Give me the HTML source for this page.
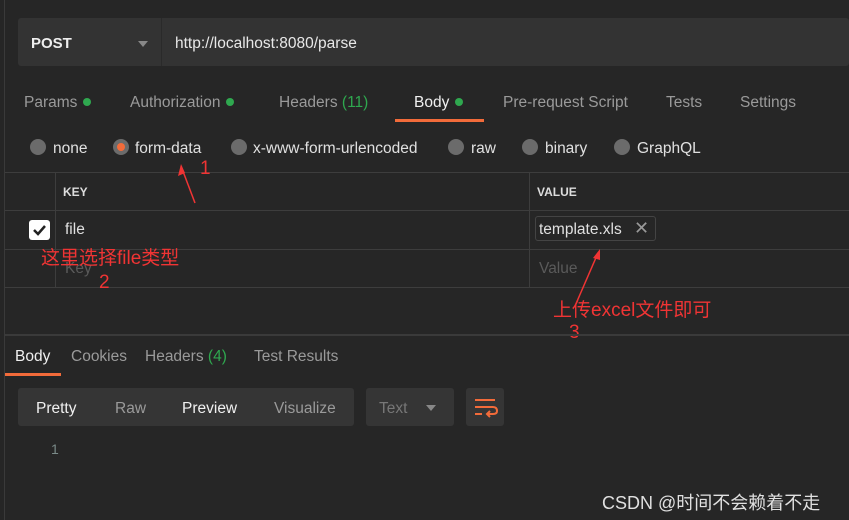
<!DOCTYPE html>
<html><head><meta charset="utf-8"><style>
*{margin:0;padding:0;box-sizing:border-box}
body{width:849px;height:520px;background:#262626;font-family:"Liberation Sans","Noto Sans CJK SC",sans-serif;color:#e0e0e0;position:relative;overflow:hidden;font-size:15.5px}
.a{position:absolute;white-space:nowrap}
.h{position:absolute;height:1px;background:#3d3d3d}
.v{position:absolute;width:1px;background:#3d3d3d}
.dot{display:inline-block;width:8px;height:8px;border-radius:50%;background:#2fa84f;margin-left:6px;vertical-align:1px}
.rad{position:absolute;width:16px;height:16px;border-radius:50%;background:#6b6b6b}
.g{color:#9a9a9a}
.red{color:#f03434;font-size:19px}
</style></head><body>
<div class="v" style="left:4px;top:0;height:520px;background:#3a3a3a"></div>
<div class="a" style="left:18px;top:18px;width:831px;height:48px;background:#333;border-radius:3px"></div>
<div class="v" style="left:161px;top:18px;height:48px;background:#2a2a2a"></div>
<div class="a" style="left:31px;top:35px;font-weight:bold;font-size:15px;color:#eee">POST</div>
<div class="a" style="left:138px;top:41px;width:0;height:0;border-left:5px solid transparent;border-right:5px solid transparent;border-top:6px solid #888"></div>
<div class="a" style="left:175px;top:35px;color:#e8e8e8">http://localhost:8080/parse</div>

<div class="a g" style="left:24px;top:94px">Params<span class="dot"></span></div>
<div class="a g" style="left:130px;top:94px">Authorization<span class="dot"></span></div>
<div class="a g" style="left:279px;top:94px">Headers <span style="color:#2fa84f">(11)</span></div>
<div class="a" style="left:414px;top:94px;color:#f0f0f0">Body<span class="dot"></span></div>
<div class="a" style="left:395px;top:119px;width:89px;height:3px;background:#f26b3a"></div>
<div class="a g" style="left:503px;top:94px">Pre-request Script</div>
<div class="a g" style="left:666px;top:94px">Tests</div>
<div class="a g" style="left:740px;top:94px">Settings</div>

<div class="rad" style="left:30px;top:139px"></div><div class="a" style="left:53px;top:140px">none</div>
<div class="rad" style="left:113px;top:139px;background:#6b6b6b"></div><div class="a" style="left:117px;top:143px;width:8px;height:8px;border-radius:50%;background:#f26b3a"></div>
<div class="a" style="left:135px;top:140px">form-data</div>
<div class="rad" style="left:231px;top:139px"></div><div class="a" style="left:253px;top:140px">x-www-form-urlencoded</div>
<div class="rad" style="left:448px;top:139px"></div><div class="a" style="left:471px;top:140px">raw</div>
<div class="rad" style="left:522px;top:139px"></div><div class="a" style="left:545px;top:140px">binary</div>
<div class="rad" style="left:614px;top:139px"></div><div class="a" style="left:637px;top:140px">GraphQL</div>

<div class="h" style="left:5px;top:172px;width:844px"></div>
<div class="h" style="left:5px;top:210px;width:844px"></div>
<div class="h" style="left:5px;top:249px;width:844px"></div>
<div class="h" style="left:5px;top:287px;width:844px"></div>
<div class="v" style="left:55px;top:172px;height:115px"></div>
<div class="v" style="left:529px;top:172px;height:115px"></div>
<div class="a" style="left:63px;top:185px;font-size:12px;font-weight:bold;color:#ddd">KEY</div>
<div class="a" style="left:537px;top:185px;font-size:12px;font-weight:bold;color:#ddd">VALUE</div>
<div class="a" style="left:29px;top:220px;width:21px;height:20px;background:#fff;border-radius:3px"></div>
<svg class="a" style="left:29px;top:220px" width="21" height="20"><path d="M5 10 L9 14 L16 6" stroke="#222" stroke-width="2.5" fill="none"/></svg>
<div class="a" style="left:65px;top:221px">file</div>
<div class="a" style="left:535px;top:216px;width:121px;height:25px;border:1px solid #444;border-radius:3px"></div>
<div class="a" style="left:539px;top:221px">template.xls</div>
<div class="a" style="left:634px;top:218px;color:#999;font-size:18px">✕</div>
<div class="a" style="left:65px;top:260px;color:#5a5a5a">Key</div>
<div class="a" style="left:539px;top:260px;color:#5a5a5a">Value</div>

<div class="a red" style="left:41px;top:243px">这里选择file类型</div>
<div class="a red" style="left:99px;top:272px">2</div>
<div class="a red" style="left:200px;top:158px">1</div>
<div class="a red" style="left:553px;top:295px">上传excel文件即可</div>
<div class="a red" style="left:569px;top:322px">3</div>
<svg class="a" style="left:0;top:0" width="849" height="520"><path d="M195 203 L181 166" stroke="#f03434" stroke-width="1.5"/><path d="M181 164 L178 176 L185 173Z" fill="#f03434"/><path d="M575 306 L598 253" stroke="#f03434" stroke-width="1.5"/><path d="M600 249 L593 258 L600 260Z" fill="#f03434"/></svg>

<div class="h" style="left:5px;top:334px;width:844px;height:2px;background:#3a3a3a"></div>
<div class="a" style="left:15px;top:348px;color:#f0f0f0">Body</div>
<div class="a" style="left:5px;top:373px;width:56px;height:3px;background:#f26b3a"></div>
<div class="a g" style="left:71px;top:348px">Cookies</div>
<div class="a g" style="left:145px;top:348px">Headers <span style="color:#2fa84f">(4)</span></div>
<div class="a g" style="left:254px;top:348px">Test Results</div>

<div class="a" style="left:18px;top:388px;width:336px;height:38px;background:#353535;border-radius:3px"></div>
<div class="a" style="left:36px;top:400px;color:#f0f0f0">Pretty</div>
<div class="a g" style="left:115px;top:400px">Raw</div>
<div class="a" style="left:182px;top:400px;color:#f0f0f0">Preview</div>
<div class="a g" style="left:274px;top:400px">Visualize</div>
<div class="a" style="left:366px;top:388px;width:88px;height:38px;background:#353535;border-radius:3px"></div>
<div class="a" style="left:379px;top:400px;color:#777">Text</div>
<div class="a" style="left:426px;top:405px;width:0;height:0;border-left:5px solid transparent;border-right:5px solid transparent;border-top:6px solid #888"></div>
<div class="a" style="left:466px;top:388px;width:38px;height:38px;background:#353535;border-radius:3px"></div>
<svg class="a" style="left:466px;top:388px" width="38" height="38"><path d="M9 12 H29 M9 19 H27 Q31 19 31 23 Q31 26 27 26 H21 M24 23 L21 26 L24 29 M9 26 H16" stroke="#f26b3a" stroke-width="2" fill="none"/></svg>
<div class="a" style="left:51px;top:441px;color:#7a8a88;font-size:14px">1</div>
<div class="a" style="left:602px;top:489px;color:#e0e0e0;font-size:18px">CSDN @时间不会赖着不走</div>
</body></html>
